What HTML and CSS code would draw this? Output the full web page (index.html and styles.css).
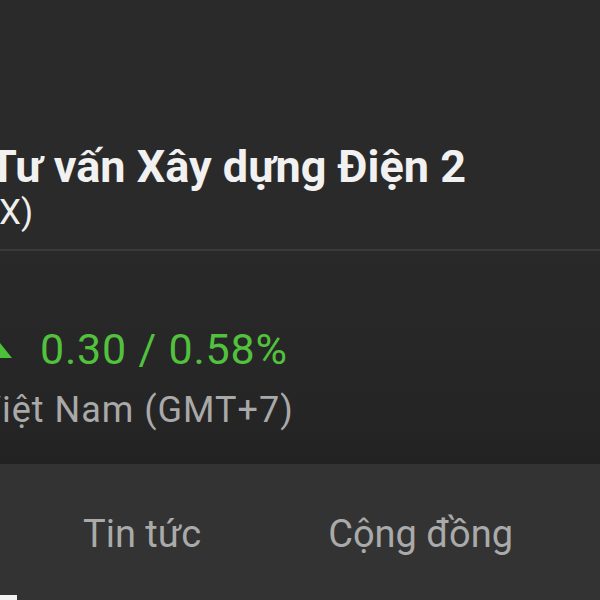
FILE: index.html
```html
<!DOCTYPE html>
<html lang="vi">
<head>
<meta charset="utf-8">
<title>TV2</title>
<link rel="stylesheet" href="styles.css">
</head>
<body>
<div class="page">
  <header class="head">
    <h1 class="title">Tư vấn Xây dựng Điện 2</h1>
    <div class="exchange">X)</div>
  </header>
  <section class="quote">
    <div class="change">
      <svg class="arrow" width="24" height="15" viewBox="0 0 24 15" aria-hidden="true"><polygon points="12,0 24,15 0,15" fill="#4cc13a"/></svg>
      <span class="change-text">0.30 / 0.58%</span>
    </div>
    <div class="tz">Việt Nam (GMT+7)</div>
  </section>
  <nav class="tabs">
    <div class="tab-row">
      <span class="tab">Tin tức</span>
      <span class="tab">Cộng đồng</span>
    </div>
    <div class="indicator"></div>
  </nav>
</div>
</body>
</html>
```
FILE: styles.css
```css
html, body {
  margin: 0;
  padding: 0;
  background: #2a2a2a;
}
.page {
  width: 600px;
  height: 600px;
  overflow: hidden;
  font-family: Roboto, "Liberation Sans", sans-serif;
  display: flex;
  flex-direction: column;
}
.head {
  background: #2a2a2a;
  padding-top: 141px;
  padding-bottom: 16px;
  border-bottom: 2px solid #3a3a3a;
}
.title {
  margin: 0 0 0 -11px;
  font-size: 45px;
  line-height: 52px;
  font-weight: 700;
  color: #f1f1f1;
  white-space: nowrap;
}
.exchange {
  font-size: 35px;
  line-height: 40px;
  color: #eeeeee;
  margin-left: -1px;
}
.quote {
  background: linear-gradient(#292929, #252525 80%, #222222);
  padding-top: 73px;
  padding-bottom: 32px;
}
.change {
  display: flex;
  align-items: center;
  height: 50px;
  margin-left: -12px;
}
.arrow {
  display: block;
  margin-top: 2px;
}
.change-text {
  margin-left: 28px;
  font-size: 43px;
  line-height: 50px;
  letter-spacing: 0.8px;
  color: #52c13d;
  white-space: nowrap;
}
.tz {
  margin-top: 14px;
  margin-left: -22px;
  font-size: 36px;
  line-height: 44px;
  letter-spacing: 1px;
  color: #a9a9a9;
  white-space: nowrap;
}
.tabs {
  flex: 1;
  background: #333333;
  padding-top: 46px;
}
.tab-row {
  display: flex;
  gap: 127px;
  padding-left: 83px;
}
.tab {
  font-size: 38px;
  line-height: 48px;
  color: #aaaaaa;
  white-space: nowrap;
}
.indicator {
  margin-top: 37px;
  width: 17px;
  height: 6px;
  background: #f2f2f2;
}
```
